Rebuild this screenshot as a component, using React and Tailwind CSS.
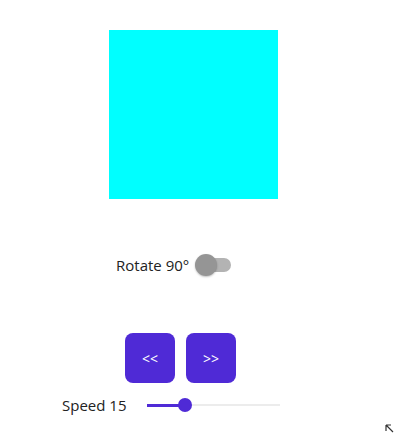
export default function App() {
    const speed = 15;
    const pct = ((185 - 147) / (280 - 147)) * 100;

    return (
        <div className="relative w-[395px] h-[433px] bg-white overflow-hidden text-[#222]" style={{ fontFamily: '"Open Sans", "Noto Sans", sans-serif' }}>
            <div className="flex flex-col">
                {/* box */}
                <div className="ml-[109px] mt-[30px] w-[169px] h-[169px] bg-[#00ffff]" />

                {/* rotate toggle */}
                <div className="ml-[116px] mt-[54px] flex items-center h-[24px]">
                    <span className="text-[15px] leading-[22px]">Rotate 90°</span>
                    <div className="relative ml-[6px] w-[36px] h-[24px] flex items-center">
                        <div className="absolute left-[6px] w-[30px] h-[14px] rounded-full bg-[#b3b3b3]" />
                        <div className="absolute left-0 w-[22px] h-[22px] rounded-full bg-[#959595] shadow-[0_1px_2px_rgba(0,0,0,0.25)]" />
                    </div>
                </div>

                {/* buttons */}
                <div className="ml-[125px] mt-[56px] flex gap-[11px]">
                    <button className="w-[50px] h-[50px] rounded-[8px] bg-[#4f2ad6] text-white text-[14px] flex items-center justify-center">
                        &lt;&lt;
                    </button>
                    <button className="w-[50px] h-[50px] rounded-[8px] bg-[#4f2ad6] text-white text-[14px] flex items-center justify-center">
                        &gt;&gt;
                    </button>
                </div>

                {/* speed slider */}
                <div className="ml-[62px] mt-[11px] flex items-center h-[22px]">
                    <span className="text-[15px] leading-[22px] w-[85px]">Speed {speed}</span>
                    <div className="relative w-[133px] h-[14px] flex items-center">
                        <div className="absolute inset-x-0 h-[2px] bg-[#ececec]" />
                        <div className="absolute left-0 h-[3px] bg-[#4f2ad6]" style={{ width: pct + "%" }} />
                        <div
                            className="absolute w-[14px] h-[14px] rounded-full bg-[#4f2ad6] -translate-x-1/2"
                            style={{ left: pct + "%" }}
                        />
                    </div>
                </div>
            </div>

            {/* cursor */}
            <svg className="absolute left-[385px] top-[424px]" width="9" height="9" viewBox="0 0 9 9">
                <path d="M1 1 L1 7 M1 1 L6 1 M1 1 L8 8" stroke="#333" strokeWidth="1.2" fill="none" />
            </svg>
        </div>
    );
}
